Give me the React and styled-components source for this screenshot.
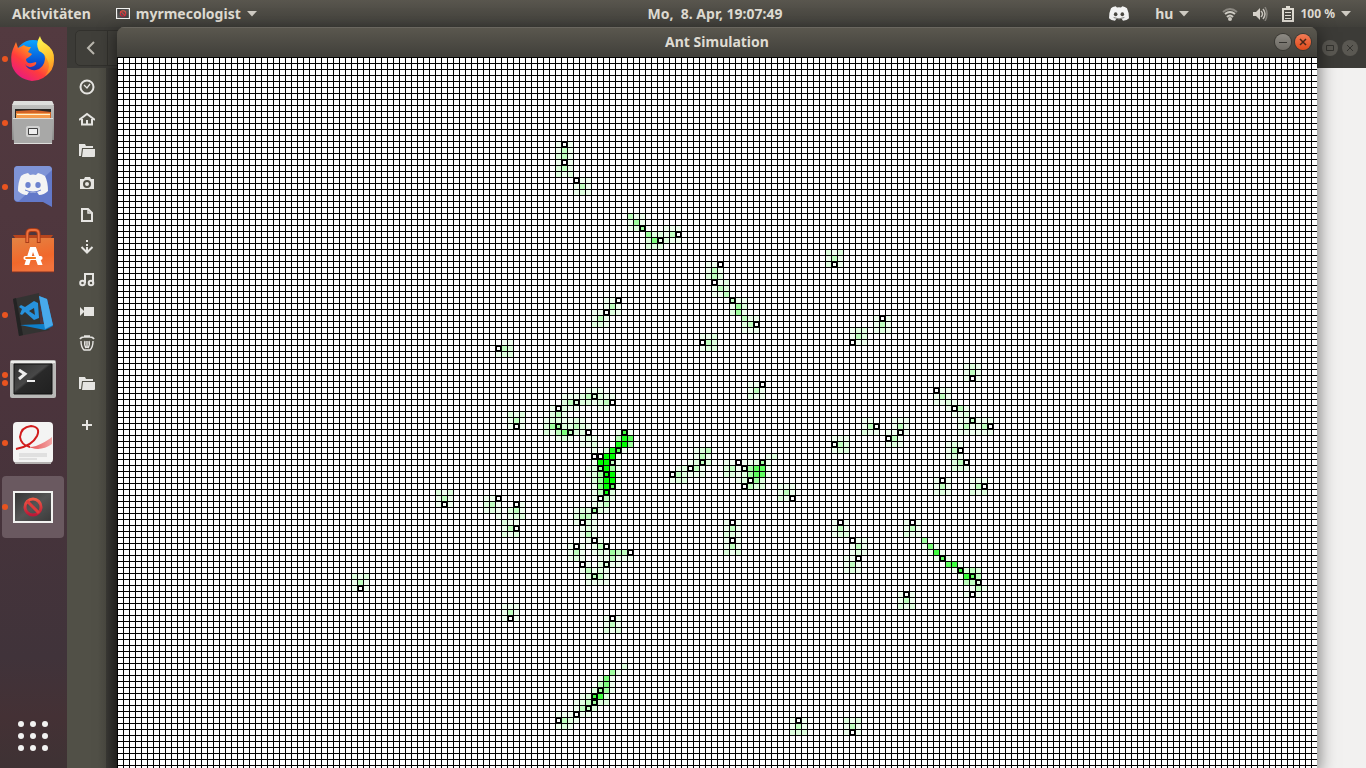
import React from "react";
import styled, { createGlobalStyle, css } from "styled-components";

const GlobalStyle = createGlobalStyle`
  * { box-sizing: border-box; }
  html, body, #root { height: 100%; }
  body {
    margin: 0;
    overflow: hidden;
    background: #3c3b37;
    color: #dfdbd2;
    font-family: "Noto Sans", "Open Sans", sans-serif;
    font-size: 14px;
    font-weight: 700;
  }
  button { font: inherit; color: inherit; border: 0; padding: 0; background: none; }
  svg { display: block; }
`;

const Desktop = styled.div`
  height: 100vh;
  display: flex;
  flex-direction: column;
`;

const TopBar = styled.header`
  height: 27px;
  flex: none;
  display: grid;
  grid-template-columns: 1fr auto 1fr;
  align-items: center;
  background: linear-gradient(#59564e, #403f3a);
  line-height: 26px;
  padding: 0 15px 0 12px;
`;

const BarGroup = styled.div`
  display: flex;
  align-items: center;
  justify-content: ${(p) => (p.$end ? "flex-end" : "flex-start")};
  gap: ${(p) => (p.$end ? "14px" : "25px")};
`;

const BarButton = styled.button`
  display: flex;
  align-items: center;
  gap: 6px;
  height: 26px;
  white-space: pre;
  font-size: 14px;
  line-height: 26px;
  margin-right: ${(p) => p.$after || 0}px;
`;

const Clock = styled(BarButton)`
  margin-left: 67px;
`;

const Percent = styled.span`
  font-size: 12px;
`;

const Body = styled.div`
  flex: 1;
  min-height: 0;
  display: flex;
`;

const Dock = styled.nav`
  width: 67px;
  flex: none;
  display: flex;
  flex-direction: column;
  justify-content: space-between;
  padding: 1px 2px;
  background: linear-gradient(#533a40, #4b343c 50%, #40333a 85%, #443135 93%, #3e3234);
`;

const DockList = styled.div`
  display: flex;
  flex-direction: column;
  gap: 2px;
`;

const DockItem = styled.button`
  position: relative;
  display: flex;
  align-items: center;
  justify-content: center;
  width: 62px;
  height: 62px;
  border-radius: 4px;
  background: ${(p) => (p.$active ? "#6a5960" : "transparent")};
`;

const Running = styled.span`
  position: absolute;
  left: 0;
  top: 0;
  height: 100%;
  display: flex;
  flex-direction: column;
  justify-content: center;
  gap: 2px;
  i {
    width: 6px;
    height: 6px;
    border-radius: 50%;
    background: #e95420;
  }
`;

const Workspace = styled.main`
  position: relative;
  flex: 1;
  min-width: 0;
  display: flex;
`;

const Files = styled.section`
  flex: 1;
  display: flex;
  flex-direction: column;
  background: #f2f1f0;
`;

const FilesHeader = styled.div`
  height: 41px;
  flex: none;
  display: flex;
  align-items: center;
  justify-content: space-between;
  padding: 0 8px;
  background: #3c3b37;
`;

const BackButton = styled.button`
  width: 62px;
  height: 36px;
  display: flex;
  align-items: center;
  padding-left: 9px;
  border: 1px solid #32312d;
  border-radius: 5px;
  background: linear-gradient(90deg, #403f3a 31px, #32312d 31px, #32312d 32px, #403f3a 32px);
`;

const HiddenControls = styled.div`
  display: flex;
  gap: 4px;
`;

const FilesContent = styled.div`
  flex: 1;
  display: flex;
`;

const Places = styled.aside`
  width: 39px;
  display: flex;
  flex-direction: column;
  align-items: center;
  padding-top: 3px;
  background: linear-gradient(90deg, #515047 30px, #4c4b43);
`;

const Place = styled.button`
  width: 100%;
  height: 32px;
  display: flex;
  align-items: center;
  justify-content: center;
  margin-top: ${(p) => (p.$separated ? "9px" : "0")};
`;

const FilePane = styled.div`
  flex: 1;
  background: linear-gradient(90deg, #3c3b37, #2f2e2a 11px, #f2f1f0 11px);
`;

const AppWindow = styled.section`
  position: absolute;
  inset: 0 49px 0 50px;
  display: flex;
  flex-direction: column;
  border-radius: 7px 7px 0 0;
  overflow: hidden;
`;

const WindowShadow = styled.div`
  position: absolute;
  inset: 4px 49px 0 50px;
  box-shadow: 0 3px 16px 2px rgba(0, 0, 0, 0.5);
`;

const TitleBar = styled.header`
  height: 30px;
  flex: none;
  display: grid;
  grid-template-columns: 1fr auto 1fr;
  align-items: center;
  padding: 0 6px;
  background: linear-gradient(#5b584f, #403f3a);
  box-shadow: inset 0 1px #6a675f;
`;

const Title = styled.h1`
  grid-column: 2;
  margin: 0;
  font-size: 14px;
  line-height: 30px;
`;

const Controls = styled.div`
  display: flex;
  justify-content: flex-end;
  gap: 4px;
`;

const RoundButton = styled.button`
  width: 16px;
  height: 16px;
  border-radius: 50%;
  color: #3c3b37;
  background: linear-gradient(#8d8a83, #6d6a64);
  box-shadow: 0 0 0 1px #393833;
  ${(p) => p.$kind === "close" && css`background: linear-gradient(#f37b55, #df4a1b);`}
  ${(p) => p.$kind === "faded" && css`background: #5a5852; box-shadow: none;`}
`;

const Field = styled.svg`
  width: 100%;
  flex: 1;
  min-height: 0;
  background: #fff;
`;

const CELL = 6;
const LEVELS = ["#fff", "#efffef", "#dfffdf", "#bfffbf", "#9fff9f", "#7fff7f", "#5fff5f", "#3fff3f", "#1fff1f", "#0f0"];

// Pheromone strength: row, first column, one digit per cell.
const TRAILS = `
14 73 101|15 73 131|16 73 231|17 73 101|18 73 231|19 73 212|20 77 11|21 76 131|22 76 121
26 85 311|27 85 141|28 85 124|28 91 111|29 88 422130|30 88 251211|31 88 222
32 118 212|33 118 131|34 118 201|34 98 11|35 98 131|36 98 232|37 100 12|38 99 132|39 99 113
40 102 311|41 102 142|42 102 241|43 104 311|44 104 23|45 104 111
40 81 11|41 81 131|42 79 11021|43 79 131|44 79 221|46 97 112|47 98 32|48 97 122
43 126 101|44 126 131|45 126 121|45 122 122|46 122 132|47 123 11|47 63 011|48 64 32|49 63 122
51 141 121|52 141 131|53 141 101|55 137 11|56 136 131|57 136 1121|58 138 1031|59 139 112|60 140 113111|61 140 13113|62 140 111111
60 124 110|61 124 13|62 124 211|60 129 111|61 129 131|62 128 1111|63 129 31|64 128 121
63 119 111|64 120 32|65 119 122|64 138 121|65 138 13|66 138 121|67 139 23|68 139 221
70 136 101|71 136 131|72 136 121|70 142 111|71 142 13|72 142 212
54 105 11|55 105 131|56 105 211
55 78 111|56 74 111232211|57 74 232221230|58 72 1021100011|59 72 231|60 71 1221121|61 71 24422321
59 65 212|60 65 131|61 65 101|62 71 213532200000171|63 73 121012100|63 83 386|64 77 112000894
65 79 102861|66 79 00991|67 79 19931|68 78 124941|69 78 124991|70 79 24991|71 79 15961|72 79 1392|73 79 1031|74 79 123
75 76 122421|76 76 2331|77 76 1021|78 77 121|79 77 131|80 78 101|81 75 1010130|82 75 13101214330|83 75 12100113111|84 78 102211|85 77 13121|86 78 2331|87 78 1111
72 53 212|73 53 131|74 53 101|73 61 11|74 61 231|74 67 1|75 61 1210231|76 63 10122|77 64 211|78 64 13|79 64 212
65 96 123|66 96 131|67 95 1232|68 93 12031|69 93 32111|70 92 122
66 108 12|67 101 110112410|68 101 231246610|69 101 22124661|70 103 12042|71 105 322|71 110 111|72 110 131|73 110 21
77 101 101|78 101 131|79 101 221|80 101 101|81 101 131|82 101 212
77 119 101|78 119 131|79 119 122|80 123 11|81 122 131|82 122 121|83 121 11|84 121 131|85 121 121
77 131 101|78 131 131|79 131 211|80 134 4|81 134 151|82 135 171|83 136 161|84 138 671|85 139 17232|86 140 1763|87 141 332|88 142 131|89 141 101
89 130 101|90 130 131|91 130 212|86 39 212|87 39 131|88 39 101|91 64 111|92 64 131|93 64 101
93 81 101|94 81 131|95 81 212|101 84 2|102 82 41|103 80 151|104 80 351|105 79 2441|106 77 12772|107 76 123422|108 76 1332|109 73 111011|110 74 321|111 73 121
110 112 101|111 112 131|112 112 222|110 121 212|111 121 131|112 121 101
`.trim().split(/[|\n]/).map((run) => {
  const [row, col, levels] = run.split(" ");
  return { row: Number(row), col: Number(col), levels };
});

const ANTS = `74,14 74,17 76,20 87,28 90,30 93,29 100,34 99,37 102,40 106,44 83,40 81,42 97,47 119,34 127,43 122,47 63,48
79,56 76,57 82,57 73,58 73,61 66,61 75,62 78,62 84,62 83,65 79,66 80,66 82,67 80,68 81,69 82,71 81,72 80,73 79,75 77,77 79,80 81,81 76,81
85,82 77,84 81,84 79,86 54,74 63,73 66,74 66,78 107,54 119,64 97,67 95,68 92,69 103,67 107,67 104,68 105,70 104,71 112,73 102,77 102,80 120,77
142,53 136,55 139,58 142,60 145,61 126,61 130,62 128,63 140,65 141,67 137,70 144,71 132,77 122,80 123,83 137,83 140,85 142,86 143,87 142,89 131,89
40,88 65,93 82,93 80,105 79,106 79,107 78,108 76,109 73,110 113,110 122,112`.split(/\s+/).map((p) => p.split(",").map(Number));

function AntField() {
  return (
    <Field role="img" aria-label="Ant field" shapeRendering="crispEdges">
      <defs>
        <pattern id="grid" width={CELL} height={CELL} patternUnits="userSpaceOnUse">
          <path d="M0 0h6v1H1v5H0z" fill="#000" />
        </pattern>
      </defs>
      {TRAILS.map(({ row, col, levels }) =>
        [...levels].map((l, i) =>
          l === "0" ? null : (
            <rect key={`${row}-${col}-${i}`} x={(col + i) * CELL} y={row * CELL} width={CELL} height={CELL} fill={LEVELS[l]} />
          )
        )
      )}
      <rect width="100%" height="100%" fill="url(#grid)" />
      {ANTS.map(([c, r]) => (
        <path key={`${c}-${r}`} fillRule="evenodd" d={`M${c * CELL} ${r * CELL}h7v7h-7zm2 2v3h3v-3z`} />
      ))}
    </Field>
  );
}

const Arrow = () => (
  <svg width="10" height="6"><path d="M0 0h10L5 5.500z" fill="#cfcbc3" /></svg>
);

const DiscordFace = ({ width, height, eye = "#4a4842" }) => (
  <svg width={width} height={height} viewBox="0 0 30 22">
    <path d="M10 0Q5 1 3 3Q0 9 0 18Q4 22 9 22L11 19Q15 20 19 19L21 22Q26 22 30 18Q30 9 27 3Q24 1 20 0L18 2Q15 1 12 2z" fill="#f4f4f4" />
    <ellipse cx="10" cy="12" rx="2.700" ry="3" fill={eye} /><ellipse cx="20" cy="12" rx="2.700" ry="3" fill={eye} />
    <path d="M7 17Q15 21 23 17" fill="none" stroke={eye} strokeWidth="1" />
  </svg>
);

const Firefox = () => (
  <svg width="46" height="46" viewBox="0 0 46 46">
    <defs>
      <linearGradient id="fx" x1="1" y1="0" x2="0.200" y2="1"><stop stopColor="#ffe226" /><stop offset="0.350" stopColor="#ff9a1f" /><stop offset="0.650" stopColor="#ff3c3c" /><stop offset="1" stopColor="#e5158b" /></linearGradient>
      <linearGradient id="fy" x1="0.500" y1="0" x2="0.700" y2="1"><stop stopColor="#fff44f" /><stop offset="0.600" stopColor="#ffbd2b" /><stop offset="1" stopColor="#ff7a24" /></linearGradient>
      <linearGradient id="fb" x1="0.500" y1="0" x2="0.500" y2="1"><stop stopColor="#0aa6ff" /><stop offset="0.600" stopColor="#0754d5" /><stop offset="1" stopColor="#3b1687" /></linearGradient>
    </defs>
    <circle cx="23" cy="22" r="18" fill="url(#fb)" />
    <path d="M6 6L8 12L14 9Q16 11 21 11L18 16L22 18Q21 20 16 23Q16 28 22 27L26 26Q27 28 24 30Q18 33 15 28Q18 35 26 34Q34 32 35 23L34 15L41 13Q46 24 41 34Q34 45 22 45Q7 43 2 30Q0 20 3 13z" fill="url(#fx)" />
    <path d="M30 0Q31 5 36 8Q45 14 44 24Q44 35 35 40Q42 31 37 23Q34 17 29 15Q25 8 30 0z" fill="url(#fy)" />
  </svg>
);

const Cabinet = () => (
  <svg width="44" height="46" viewBox="1 0 44 46">
    <defs><linearGradient id="cab" x2="0" y2="1"><stop stopColor="#c6c6c4" /><stop offset="1" stopColor="#888887" /></linearGradient></defs>
    <path d="M4 1h38l2 5v34H2V6z" fill="url(#cab)" /><path d="M4 1h38l2 4H2z" fill="#dededc" />
    <path d="M5 9h36v10H5z" fill="#292725" /><path d="M6 11l18-1 17 2v8H6z" fill="#d26328" /><path d="M6 13h34v6H6z" fill="#f49b4c" /><path d="M7 14h33v1H7z" fill="#fff2cf" />
    <path d="M3 18h40l-1 26H4z" fill="#a8a8a7" /><path d="M3 18h40v1H3zM4 43h38v1H4z" fill="#dededc" />
    <rect x="17" y="27" width="12" height="9" rx="1" fill="#a8a8a7" stroke="#d2d2d1" strokeWidth="2" /><path d="M18.500 28.500h9v6h-9z" fill="#eee" stroke="#444" />
  </svg>
);

const DiscordApp = () => (
  <svg width="40" height="44" viewBox="0 0 40 44">
    <path d="M5 1h30q4 0 4 4v37l-9-5H5q-4 0-4-4V5q0-4 4-4z" fill="#6379c9" /><path d="M5 1h30q4 0 4 4L6 36q-5 1-5-4V5q0-4 4-4z" fill="#7f94d7" />
    <svg x="5" y="8" width="30" height="22"><DiscordFace width="30" height="22" eye="#6d83cf" /></svg>
  </svg>
);

const SoftwareBag = () => (
  <svg width="42" height="46" viewBox="0 0 44 46" preserveAspectRatio="none">
    <defs><linearGradient id="bag" x2="0.300" y2="1"><stop stopColor="#e28444" /><stop offset="0.700" stopColor="#f1682b" /><stop offset="1" stopColor="#f2733c" /></linearGradient></defs>
    <path d="M1 7h42l-3 4H4z" fill="#b7451d" /><path d="M0 10h44v34H0z" fill="url(#bag)" /><path d="M0 44h44" stroke="#7b3024" />
    <path d="M16 15V6q0-4 4-4h4q4 0 4 4v9" fill="none" stroke="#a83c18" strokeWidth="4" /><path d="M16 14V6q0-4 4-4h4q4 0 4 4v8" fill="none" stroke="#ee713e" strokeWidth="2" />
    <path d="M13 37l6-18h6l7 18h-5l-5-13-4 13z" fill="#fff" /><path d="M14 28h16q2 0 2 2t-2 2H14q-2 0-2-2t2-2z" fill="#fff" /><path d="M14 30h11" stroke="#f47c21" strokeWidth="2" />
  </svg>
);

const CodeApp = () => (
  <svg width="42" height="46" viewBox="0 0 42 46">
    <path d="M1 7L27 1l1 30 10 7-31 6z" fill="#333332" /><path d="M1 7l3-1 7 37-4 1z" fill="#232323" />
    <path d="M8 33l24-1-5-28 8 3 6 27-8 4z" fill="#0e7fca" /><path d="M27 4l8 3 6 26-8 4z" fill="#48a9ea" />
    <path fillRule="evenodd" d="M22 9l4 2 1 15-5 2-9-8-3 3-2-1 2-5-3-2 2-2 4 2zm0 7l-5 3 6 4z" fill="#2792dc" />
  </svg>
);

const TerminalApp = () => (
  <svg width="46" height="38" viewBox="0 0 46 38">
    <defs><linearGradient id="ter" x2="1" y2="1"><stop stopColor="#303030" /><stop offset="0.450" stopColor="#484848" /><stop offset="0.500" stopColor="#292929" /><stop offset="1" stopColor="#202020" /></linearGradient></defs>
    <rect width="46" height="38" rx="2" fill="#b9b9b7" /><path d="M1 1h44v2H1z" fill="#eeeeec" /><path d="M4 4h38v30H4z" fill="url(#ter)" stroke="#111" />
    <path d="M9 10l6 4-6 5" fill="none" stroke="#eee" strokeWidth="3" /><path d="M17 21h8" stroke="#eee" strokeWidth="2" />
  </svg>
);

const DocViewer = () => (
  <svg width="42" height="44" viewBox="0 0 42 44">
    <defs><linearGradient id="swoosh" x2="1"><stop stopColor="#e03a3a" /><stop offset="1" stopColor="#f3a5a5" /></linearGradient></defs>
    <rect x="1" y="1" width="40" height="41" rx="4" fill="#f4f4f3" /><path d="M3 42h36" stroke="#b5b2b1" strokeWidth="2" />
    <path d="M10 22Q14 28 24 25Q34 21 40 16v7Q30 30 20 27Q13 26 10 22z" fill="url(#swoosh)" />
    <path d="M4 28Q20 25 25 15Q29 6 19 5Q9 6 8 16Q9 24 18 26" fill="none" stroke="#d21c1c" strokeWidth="2" />
    <path d="M7 33h28M7 35h28M7 38h18" stroke="#ccc" />
  </svg>
);

const SimulationApp = ({ small }) => (
  <svg width={small ? 14 : 40} height={small ? 11 : 32} viewBox="0 0 40 32">
    <defs>
      <linearGradient id="sim" x2="1" y2="1"><stop stopColor="#323232" /><stop offset="0.500" stopColor="#555" /><stop offset="1" stopColor="#393939" /></linearGradient>
      <linearGradient id="ban" x2="0" y2="1"><stop stopColor="#f05b45" /><stop offset="1" stopColor="#bc1837" /></linearGradient>
    </defs>
    <rect x="1" y="1" width="38" height="30" fill="url(#sim)" stroke="#f2f2f0" strokeWidth={small ? 4 : 2} />
    <circle cx="20" cy="16" r="8" fill="none" stroke="url(#ban)" strokeWidth="3" /><path d="M14 10l12 12" stroke="#df3b3b" strokeWidth="3" />
  </svg>
);

const AppsGrid = () => (
  <svg width="32" height="32" fill="#f2f2f1">
    {[4, 16, 28].flatMap((y) => [4, 16, 28].map((x) => <circle key={`${x}-${y}`} cx={x} cy={y} r="3" />))}
  </svg>
);

const DOCK = [
  ["Firefox", Firefox, 1], ["Dateien", Cabinet, 1], ["Discord", DiscordApp, 1], ["Ubuntu Software", SoftwareBag, 0],
  ["Visual Studio Code", CodeApp, 1], ["Terminal", TerminalApp, 2], ["Dokumentenbetrachter", DocViewer, 1], ["myrmecologist", SimulationApp, 1],
];

const folder = <path d="M0 1h6l1 2h7v2H3L2 13H0zM4 6h12v7q0 1-1 1H3z" fill="#e6e5e2" />;
const PLACES = [
  ["Zuletzt verwendet", <><circle cx="8" cy="8" r="6.500" /><path d="M5 6l3 3 3-4" strokeWidth="1.300" /></>],
  ["Persönlicher Ordner", <><path d="M0 9l8-6 8 6M3 8v5.500h10V8" /><path d="M8 9v4" /></>],
  ["Schreibtisch", folder],
  ["Bilder", <path fillRule="evenodd" d="M1 4h4l1-2h5l1 2h3v10H1zM8 5a4 4 0 1 0 0 8 4 4 0 0 0 0-8zm0 2a2 2 0 1 1 0 4 2 2 0 0 1 0-4z" fill="#e6e5e2" stroke="none" />],
  ["Dokumente", <><path d="M3 2h6l4 4v8H3z" /><path d="M9 2v4h4" strokeWidth="1.500" /></>],
  ["Downloads", <><path d="M8 1v2M8 5v2M8 8v5" /><path d="M2.500 8L8 13.500 13.500 8" /></>],
  ["Musik", <><circle cx="3.500" cy="12" r="2.300" /><circle cx="12" cy="12" r="2.300" /><path d="M6 12V3h8v9M6 3h8" /></>],
  ["Videos", <path d="M5 4h10v9H5zM1 4l4 4v1l-4 4z" fill="#e6e5e2" stroke="none" />],
  ["Papierkorb", <><path d="M1 4q1-2 4-2h6q3 0 4 2M5 1h6" strokeWidth="1.700" /><path d="M2 6q0 6 3 9h6q3-3 3-9M6 6q-1 4 1 7M10 6q1 4-1 7M8 6v7" strokeWidth="1.400" /></>],
  ["Projekte", folder],
  ["Andere Orte", <path d="M8 3v10M3 8h10" />],
];

export default function App() {
  return (
    <Desktop>
      <GlobalStyle />
      <TopBar>
        <BarGroup>
          <BarButton>Aktivitäten</BarButton>
          <BarButton><SimulationApp small />myrmecologist<Arrow /></BarButton>
        </BarGroup>
        <Clock>{"Mo,  8. Apr, 19:07:49"}</Clock>
        <BarGroup $end>
          <BarButton aria-label="Discord" $after={12}><DiscordFace width="20" height="15" /></BarButton>
          <BarButton $after={19}>hu<Arrow /></BarButton>
          <svg width="16" height="14" fill="none" strokeWidth="2">
            <path d="M1 5Q8-1 15 5" stroke="#8c8982" /><path d="M3 7q5-4 10 0M5 10q3-3 6 0" stroke="#d0cdc5" /><circle cx="8" cy="12" r="2" fill="#d0cdc5" />
          </svg>
          <svg width="16" height="14" fill="none">
            <path d="M1 5h3l4-4v12L4 9H1z" fill="#d8d4cc" /><path d="M9 4q3 3 0 6M11 2q4 5 0 10" stroke="#c9c5bd" strokeWidth="1.500" /><path d="M13 0q4 7 0 14" stroke="#85827b" strokeWidth="1.500" />
          </svg>
          <BarButton>
            <svg width="12" height="16"><path d="M4 0h4v3H4z" fill="#dfdbd2" /><rect x="1" y="3" width="10" height="12" fill="none" stroke="#dfdbd2" strokeWidth="2" /><path d="M3 6.500h6M3 9.500h6M3 12.500h6" stroke="#dfdbd2" /></svg>
            <Percent>100 %</Percent><Arrow />
          </BarButton>
        </BarGroup>
      </TopBar>
      <Body>
        <Dock>
          <DockList>
            {DOCK.map(([name, Icon, windows]) => (
              <DockItem key={name} aria-label={name} $active={name === "myrmecologist"}>
                <Running>{Array.from({ length: windows }, (_, i) => <i key={i} />)}</Running>
                <Icon />
              </DockItem>
            ))}
          </DockList>
          <DockItem aria-label="Anwendungen anzeigen"><AppsGrid /></DockItem>
        </Dock>
        <Workspace>
          <Files>
            <FilesHeader>
              <BackButton aria-label="Zurück"><svg width="12" height="14"><path d="M9 1L3 7l6 6" fill="none" stroke="#b9b6ae" strokeWidth="2" /></svg></BackButton>
              <HiddenControls>
                <RoundButton $kind="faded" aria-label="Maximieren"><svg width="16" height="16"><path d="M4.500 5.500h7v5h-7z" fill="none" stroke="#34332f" /></svg></RoundButton>
                <RoundButton $kind="faded" aria-label="Schließen"><svg width="16" height="16"><path d="M5 5l6 6M11 5l-6 6" stroke="#34332f" /></svg></RoundButton>
              </HiddenControls>
            </FilesHeader>
            <FilesContent>
              <Places>
                {PLACES.map(([name, icon], i) => (
                  <Place key={name} aria-label={name} $separated={i > 8}>
                    <svg width="16" height="16" fill="none" stroke={icon === folder ? "none" : "#e6e5e2"} strokeWidth="2">{icon}</svg>
                  </Place>
                ))}
              </Places>
              <FilePane />
            </FilesContent>
          </Files>
          <WindowShadow />
          <AppWindow>
            <TitleBar>
              <Title>Ant Simulation</Title>
              <Controls>
                <RoundButton aria-label="Minimieren"><svg width="16" height="16"><path d="M4 8.500h8" stroke="#34332f" /></svg></RoundButton>
                <RoundButton $kind="close" aria-label="Schließen"><svg width="16" height="16"><path d="M5 5l6 6M11 5l-6 6" stroke="#4a2618" strokeWidth="1.500" /></svg></RoundButton>
              </Controls>
            </TitleBar>
            <AntField />
          </AppWindow>
        </Workspace>
      </Body>
    </Desktop>
  );
}
